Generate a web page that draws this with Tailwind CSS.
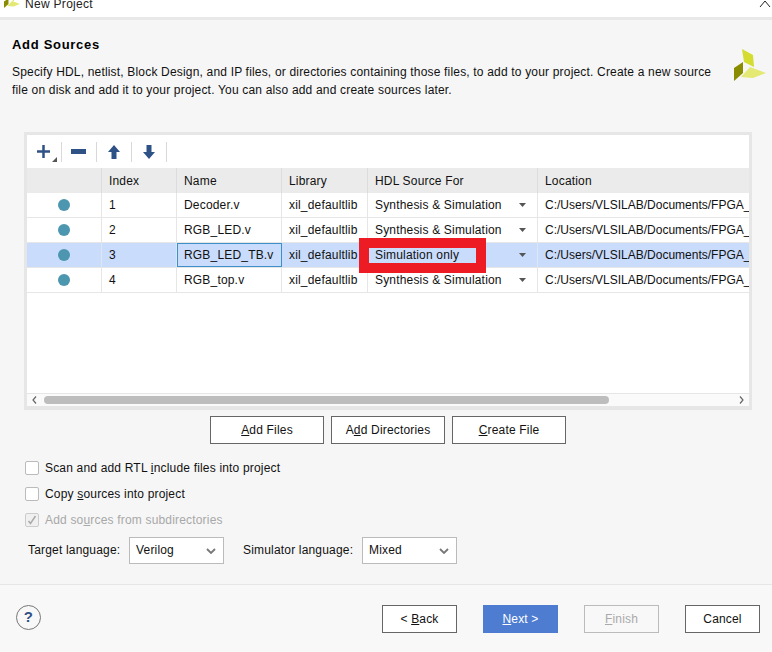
<!DOCTYPE html>
<html lang="en">
  <head>
    <meta charset="UTF-8" />
    <meta name="viewport" content="width=device-width, initial-scale=1.0" />
    <title>New Project</title>
    <script src="https://cdn.jsdelivr.net/npm/@tailwindcss/browser@4"></script>
  </head>
  <body class="bg-[#f6f6f6]">
    <div class="relative flex h-[652px] w-[772px] flex-col overflow-hidden font-['Liberation_Sans',Arial,sans-serif] text-[12px] tracking-[0.18px] text-[#111]">
      <!-- title bar -->
      <div class="relative h-[20px] shrink-0 overflow-hidden border-b-[3px] border-[#e8e8e8] bg-white">
        <svg class="absolute left-[4px] top-[-8px]" width="16" height="16" viewBox="734 49 32 32">
          <path d="M742 49l11 6 1 12-10-5z" fill="#d3dc2f"/>
          <path d="M750 67l16 6-13 5-12-1z" fill="#e3e972"/>
          <path d="M743 62v11l-9 8V68z" fill="#8a8c00"/>
        </svg>
        <span class="absolute left-[25px] top-[-5px] tracking-[0.3px] text-[#222]">New Project</span>
        <svg class="absolute left-[759px] top-[0px]" width="12" height="7" viewBox="0 0 12 7"><path d="M1 7l5-6 5 6" fill="none" stroke="#222" stroke-width="1"/></svg>
      </div>

      <!-- heading -->
      <div class="relative h-[112px] shrink-0 px-[12px] pt-[17px]">
        <h1 class="text-[13px] leading-[16px] font-bold tracking-[0.7px] text-black">Add Sources</h1>
        <p class="mt-[10px] leading-[18px] whitespace-nowrap">Specify HDL, netlist, Block Design, and IP files, or directories containing those files, to add to your project. Create a new source<br />file on disk and add it to your project. You can also add and create sources later.</p>
        <svg class="absolute left-[734px] top-[29px]" width="32" height="32" viewBox="734 49 32 32">
          <path d="M742 49l11 6 1 12-10-5z" fill="#d3dc2f"/>
          <path d="M750 67l16 6-13 5-12-1z" fill="#e3e972"/>
          <path d="M743 62v11l-9 8V68z" fill="#8a8c00"/>
        </svg>
      </div>

      <!-- sources table -->
      <div class="mx-[24px] h-[278px] w-[728px] shrink-0 border-x-[3px] border-t-[3px] border-b-[4px] border-[#e6e6e6] bg-white">
        <div class="flex h-[33px] items-center pl-[5px]">
          <div class="relative flex h-[20px] w-[29.500px] items-center justify-center border-r border-[#d8d8d8] pr-[6px]">
            <svg width="15" height="15" viewBox="0 0 15 15"><path d="M7.500 1v13M1 7.500h13" stroke="#2f5286" stroke-width="2.500"/></svg>
            <svg class="absolute left-[20px] top-[15px]" width="5" height="5" viewBox="0 0 5 5"><path d="M5 0v5H0z" fill="#555"/></svg>
          </div>
          <div class="flex h-[20px] w-[35px] items-center justify-center border-r border-[#d8d8d8]">
            <svg width="15" height="5" viewBox="0 0 15 5"><path d="M0 0h15v5H0z" fill="#2f5286"/></svg>
          </div>
          <div class="flex h-[20px] w-[35px] items-center justify-center border-r border-[#d8d8d8]">
            <svg width="12" height="14" viewBox="0 0 12 14"><path d="M6 0l6 7H8.500v7h-5V7H0z" fill="#2f5286"/></svg>
          </div>
          <div class="flex h-[20px] w-[35px] items-center justify-center border-r border-[#d8d8d8]">
            <svg width="12" height="14" viewBox="0 0 12 14"><path d="M6 14l6-7H8.500V0h-5v7H0z" fill="#2f5286"/></svg>
          </div>
        </div>

        <!-- header row -->
        <div class="grid h-[25px] grid-cols-[75px_75px_105px_86px_170px_211px] overflow-hidden bg-[#ebebeb] leading-[26px]">
          <div class="border-r border-[#dcdcdc]"></div>
          <div class="border-r border-[#dcdcdc] pl-[7px]">Index</div>
          <div class="border-r border-[#dcdcdc] pl-[7px]">Name</div>
          <div class="border-r border-[#dcdcdc] pl-[7px]">Library</div>
          <div class="border-r border-[#dcdcdc] pl-[7px]">HDL Source For</div>
          <div class="pl-[7px]">Location</div>
        </div>

        <!-- rows -->
        <div class="grid h-[25px] grid-cols-[75px_75px_105px_86px_170px_211px] overflow-hidden border-b border-[#e6e6e6] leading-[24px]">
          <div class="flex items-center justify-center border-r border-[#e6e6e6]"><span class="h-[12px] w-[12px] rounded-full bg-[#4c96b0]"></span></div>
          <div class="border-r border-[#e6e6e6] pl-[7px]">1</div>
          <div class="border-r border-[#e6e6e6] pl-[7px]">Decoder.v</div>
          <div class="overflow-hidden border-r border-[#e6e6e6] pl-[7px] whitespace-nowrap">xil_defaultlib</div>
          <div class="flex items-center justify-between border-r border-[#e6e6e6] pr-[11px] pl-[7px]"><span>Synthesis &amp; Simulation</span><svg width="7" height="4" viewBox="0 0 7 4"><path d="M0 0h7L3.500 4z" fill="#555"/></svg></div>
          <div class="overflow-hidden pl-[7px] tracking-normal whitespace-nowrap">C:/Users/VLSILAB/Documents/FPGA_Projects/RGB_LED</div>
        </div>
        <div class="grid h-[25px] grid-cols-[75px_75px_105px_86px_170px_211px] overflow-hidden border-b border-[#e6e6e6] leading-[24px]">
          <div class="flex items-center justify-center border-r border-[#e6e6e6]"><span class="h-[12px] w-[12px] rounded-full bg-[#4c96b0]"></span></div>
          <div class="border-r border-[#e6e6e6] pl-[7px]">2</div>
          <div class="border-r border-[#e6e6e6] pl-[7px]">RGB_LED.v</div>
          <div class="overflow-hidden border-r border-[#e6e6e6] pl-[7px] whitespace-nowrap">xil_defaultlib</div>
          <div class="flex items-center justify-between border-r border-[#e6e6e6] pr-[11px] pl-[7px]"><span>Synthesis &amp; Simulation</span><svg width="7" height="4" viewBox="0 0 7 4"><path d="M0 0h7L3.500 4z" fill="#555"/></svg></div>
          <div class="overflow-hidden pl-[7px] tracking-normal whitespace-nowrap">C:/Users/VLSILAB/Documents/FPGA_Projects/RGB_LED</div>
        </div>
        <div class="grid h-[25px] grid-cols-[75px_75px_105px_86px_170px_211px] overflow-hidden border-b border-[#e6e6e6] bg-[#c9dcfc] leading-[24px]">
          <div class="flex items-center justify-center border-r border-[#dfe6f2]"><span class="h-[12px] w-[12px] rounded-full bg-[#4c96b0]"></span></div>
          <div class="border-r border-[#dfe6f2] pl-[7px]">3</div>
          <div class="border border-[#3d8fc9] pl-[6px] leading-[22px]">RGB_LED_TB.v</div>
          <div class="overflow-hidden border-r border-[#dfe6f2] pl-[7px] whitespace-nowrap">xil_defaultlib</div>
          <div class="flex items-center justify-between border-r border-[#dfe6f2] pr-[11px] pl-[7px]"><span>Simulation only</span><svg width="7" height="4" viewBox="0 0 7 4"><path d="M0 0h7L3.500 4z" fill="#555"/></svg></div>
          <div class="overflow-hidden pl-[7px] tracking-normal whitespace-nowrap">C:/Users/VLSILAB/Documents/FPGA_Projects/RGB_LED</div>
        </div>
        <div class="grid h-[25px] grid-cols-[75px_75px_105px_86px_170px_211px] overflow-hidden border-b border-[#e6e6e6] leading-[24px]">
          <div class="flex items-center justify-center border-r border-[#e6e6e6]"><span class="h-[12px] w-[12px] rounded-full bg-[#4c96b0]"></span></div>
          <div class="border-r border-[#e6e6e6] pl-[7px]">4</div>
          <div class="border-r border-[#e6e6e6] pl-[7px]">RGB_top.v</div>
          <div class="overflow-hidden border-r border-[#e6e6e6] pl-[7px] whitespace-nowrap">xil_defaultlib</div>
          <div class="flex items-center justify-between border-r border-[#e6e6e6] pr-[11px] pl-[7px]"><span>Synthesis &amp; Simulation</span><svg width="7" height="4" viewBox="0 0 7 4"><path d="M0 0h7L3.500 4z" fill="#555"/></svg></div>
          <div class="overflow-hidden pl-[7px] tracking-normal whitespace-nowrap">C:/Users/VLSILAB/Documents/FPGA_Projects/RGB_LED</div>
        </div>

        <div class="h-[100px]"></div>

        <!-- horizontal scrollbar -->
        <div class="flex h-[13px] items-center justify-between border-t border-[#e6e6e6] bg-[#fafafa] px-[5px]">
          <svg width="5" height="8" viewBox="0 0 5 8"><path d="M4 .5L1 4l3 3.500" fill="none" stroke="#666" stroke-width="1.200"/></svg>
          <div class="mr-[130px] ml-[7px] h-[8px] flex-1 rounded-full bg-[#bdbdbd]"></div>
          <svg width="5" height="8" viewBox="0 0 5 8"><path d="M1 .5L4 4 1 7.500" fill="none" stroke="#666" stroke-width="1.200"/></svg>
        </div>
      </div>

      <!-- add buttons -->
      <div class="mt-[6px] flex shrink-0 gap-[7px] pl-[210px]">
        <button class="h-[28px] w-[114px] border border-[#666] bg-white text-center"><u>A</u>dd Files</button>
        <button class="h-[28px] w-[114px] border border-[#666] bg-white text-center">A<u>d</u>d Directories</button>
        <button class="h-[28px] w-[114px] border border-[#666] bg-white text-center"><u>C</u>reate File</button>
      </div>

      <!-- options -->
      <div class="mt-[17px] flex shrink-0 flex-col gap-[12px] pl-[25px]">
        <label class="flex h-[14px] items-center gap-[6px]"><span class="h-[14px] w-[14px] rounded-[2px] border border-[#bbb] bg-white"></span><span>Scan and add RTL <u>i</u>nclude files into project</span></label>
        <label class="flex h-[14px] items-center gap-[6px]"><span class="h-[14px] w-[14px] rounded-[2px] border border-[#bbb] bg-white"></span><span>Copy <u>s</u>ources into project</span></label>
        <label class="flex h-[14px] items-center gap-[6px] text-[#a8a8a8]">
          <span class="flex h-[14px] w-[14px] items-center justify-center rounded-[2px] border border-[#ccc] bg-[#f0f0f0]"><svg width="10" height="10" viewBox="0 0 10 10"><path d="M1.500 6l2 2.500L8.500 1" fill="none" stroke="#aaa" stroke-width="1.500"/></svg></span>
          <span>Add so<u>u</u>rces from subdirectories</span>
        </label>
      </div>

      <div class="mt-[10px] flex h-[27px] shrink-0 items-center pl-[28px] leading-[25px]">
        <span class="mb-[1px] w-[101px]">Target language:</span>
        <div class="flex h-[27px] w-[95px] items-center justify-between border border-[#bbb] bg-white pr-[7px] pl-[6px]"><span class="mb-[1px]">Verilog</span><svg width="10" height="6" viewBox="0 0 10 6"><path d="M1 1l4 4 4-4" fill="none" stroke="#777" stroke-width="1.800"/></svg></div>
        <span class="mb-[1px] ml-[19px] w-[119px]">Simulator language:</span>
        <div class="flex h-[27px] w-[95px] items-center justify-between border border-[#bbb] bg-white pr-[7px] pl-[6px]"><span class="mb-[1px]">Mixed</span><svg width="10" height="6" viewBox="0 0 10 6"><path d="M1 1l4 4 4-4" fill="none" stroke="#777" stroke-width="1.800"/></svg></div>
      </div>

      <!-- footer -->
      <div class="mt-[20px] flex flex-1 items-start border-t border-[#e6e6e6] bg-[#f8f8f8] pt-[20px] pr-[12px] pl-[16px]">
        <div class="flex h-[25px] w-[25px] items-center justify-center rounded-full border border-[#777] text-[15px] font-bold text-[#2f5286]">?</div>
        <div class="ml-auto flex gap-[26px]">
          <button class="h-[28px] w-[75px] border border-[#666] bg-white text-center">&lt; <u>B</u>ack</button>
          <button class="h-[28px] w-[75px] bg-[#4d7cd0] text-center text-white"><u>N</u>ext &gt;</button>
          <button class="h-[28px] w-[75px] border border-[#bbb] bg-[#f8f8f8] text-center text-[#aaa]"><u>F</u>inish</button>
          <button class="h-[28px] w-[75px] border border-[#666] bg-white text-center">Cancel</button>
        </div>
      </div>

      <!-- red annotation box over the table -->
      <div class="absolute left-[359px] top-[238px] h-[35px] w-[127px] border-[10px] border-[#ed1c24]"></div>
    </div>
  </body>
</html>
